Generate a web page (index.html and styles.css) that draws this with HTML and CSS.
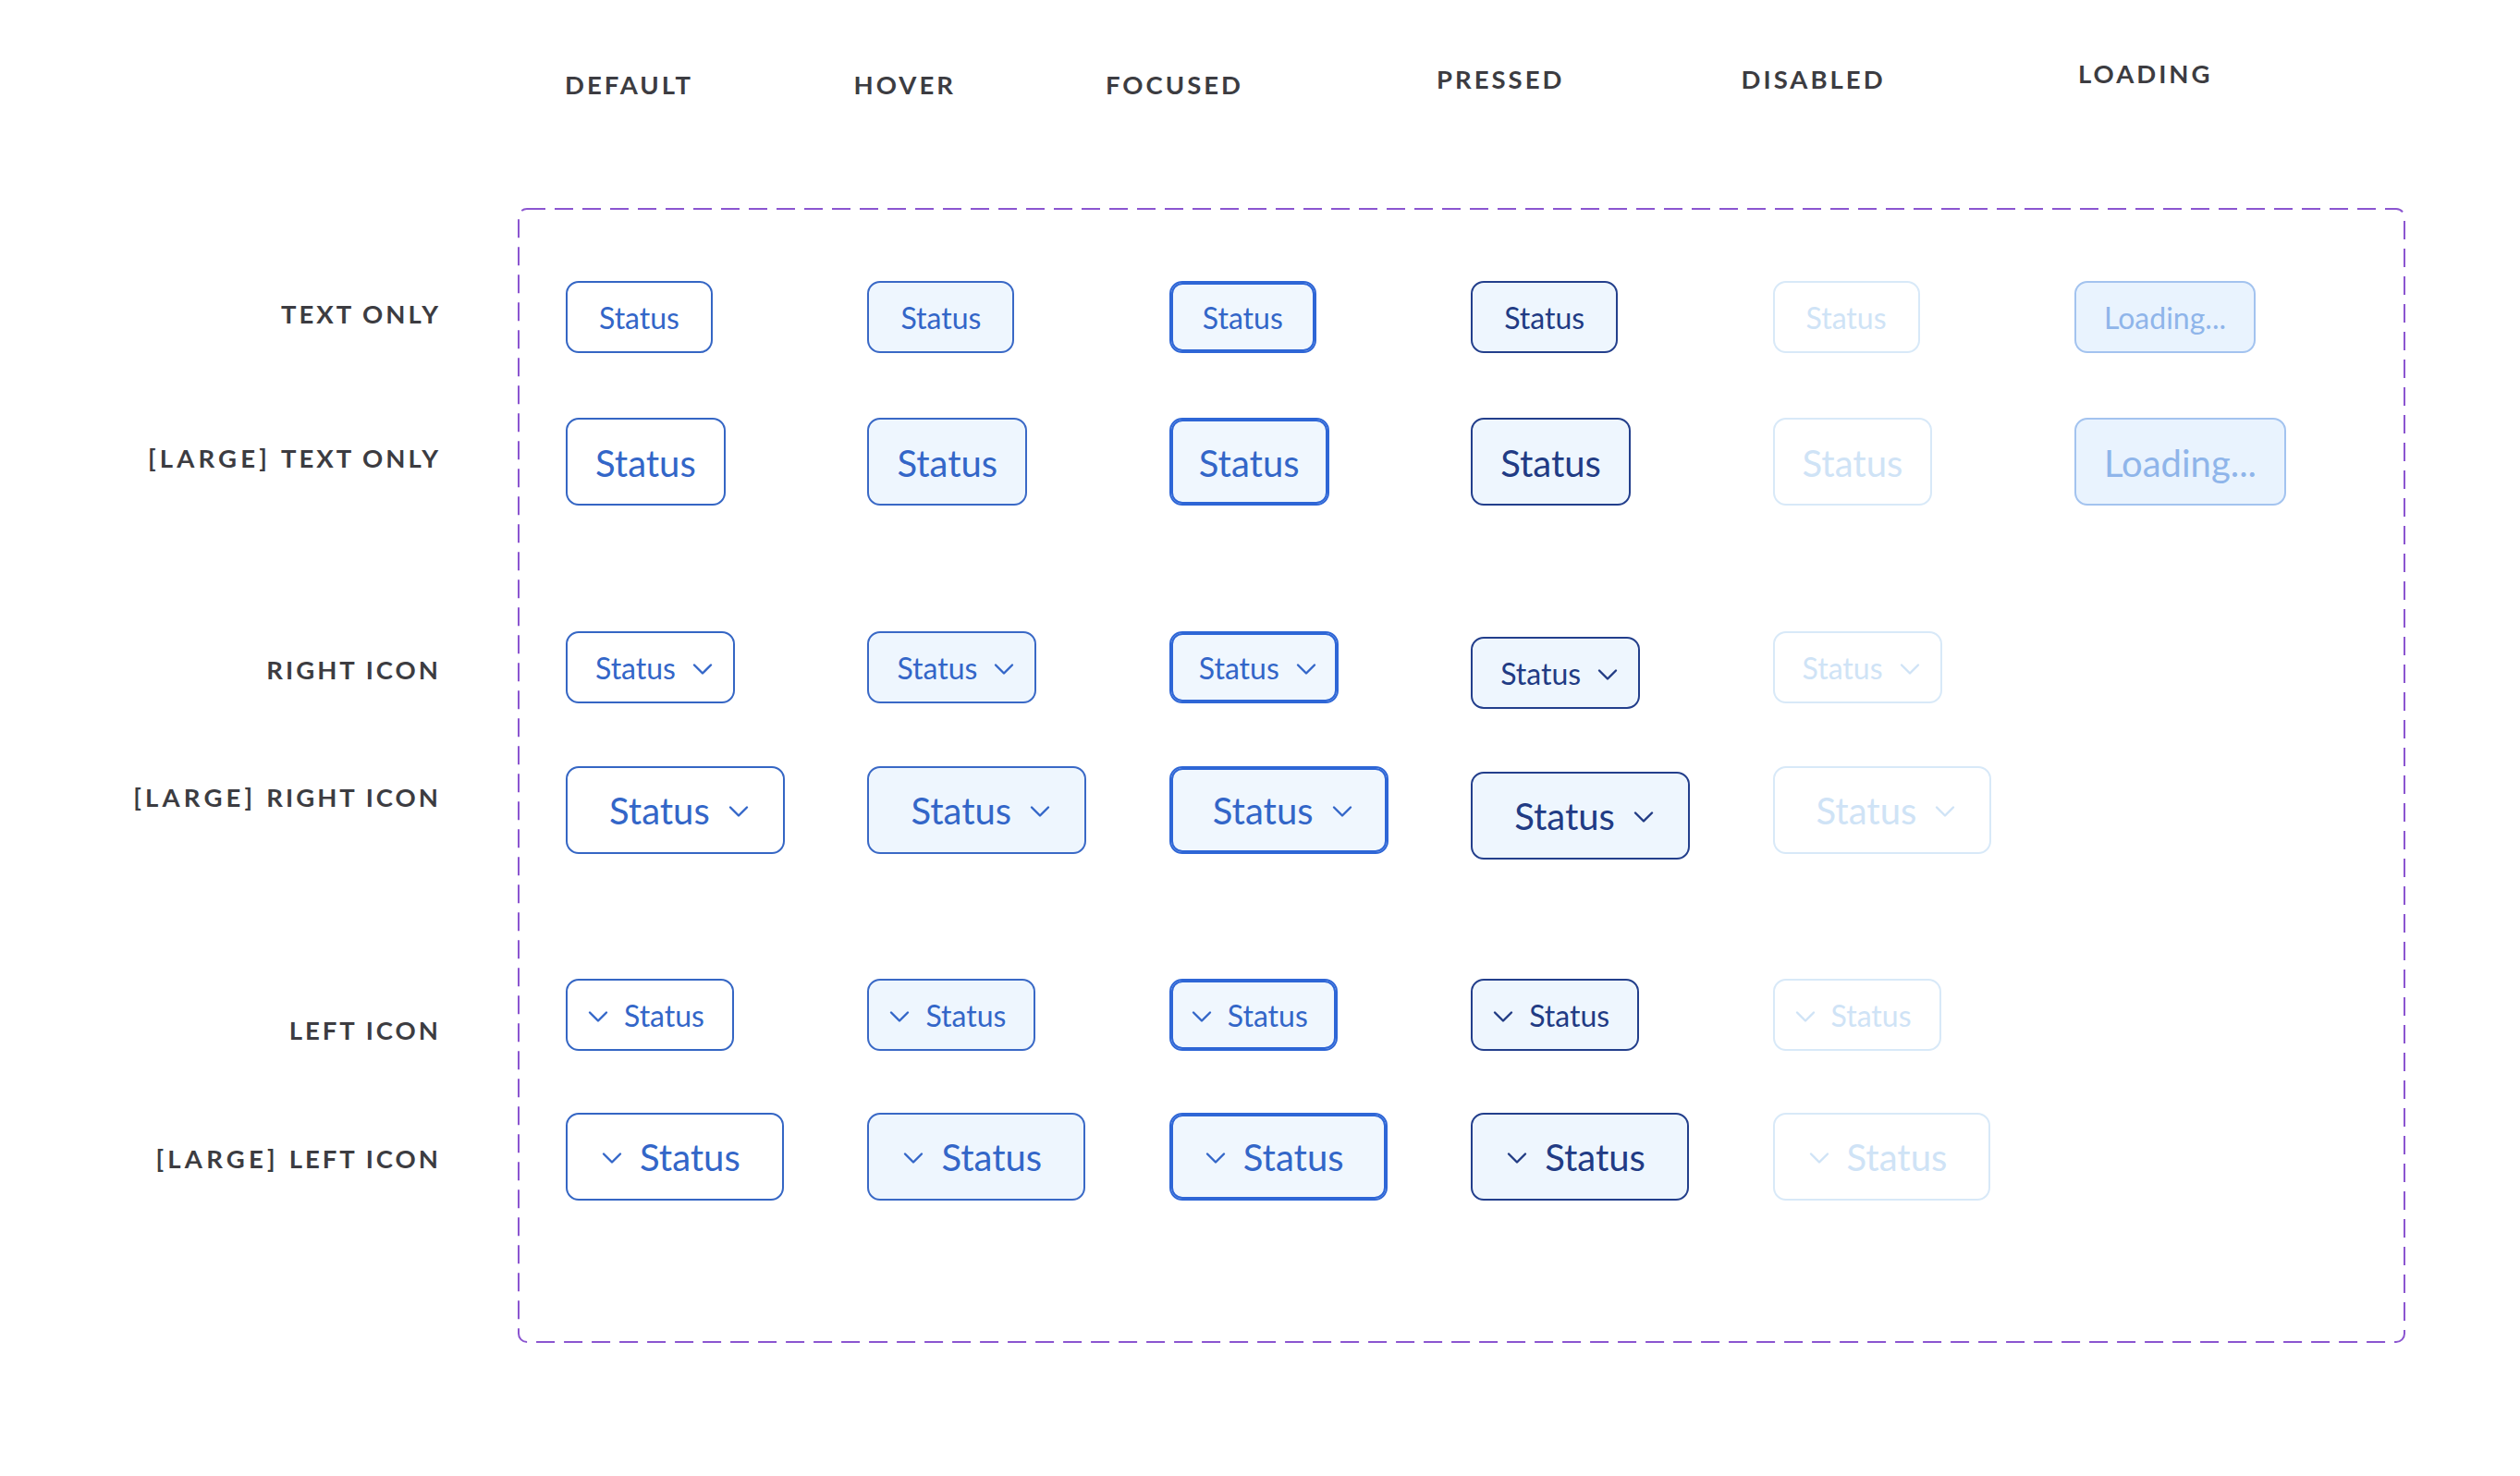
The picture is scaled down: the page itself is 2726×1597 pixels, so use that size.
FILE: index.html
```html
<!DOCTYPE html>
<html lang="en">
<head>
<meta charset="utf-8">
<title>Status button states</title>
<link rel="stylesheet" href="styles.css">
</head>
<body>
<div class="page">
  <header class="state-heads">
    <div class="state-head head-default">DEFAULT</div>
    <div class="state-head head-hover">HOVER</div>
    <div class="state-head head-focused">FOCUSED</div>
    <div class="state-head head-pressed">PRESSED</div>
    <div class="state-head head-disabled">DISABLED</div>
    <div class="state-head head-loading">LOADING</div>
  </header>

  <main class="matrix">
    <div class="row-labels">
      <div class="row row-1"><span class="row-label label-1">TEXT ONLY</span></div>
      <div class="row row-2"><span class="row-label label-2"><span class="size-tag">[LARGE] </span>TEXT ONLY</span></div>
      <div class="row row-3"><span class="row-label label-3">RIGHT ICON</span></div>
      <div class="row row-4"><span class="row-label label-4"><span class="size-tag">[LARGE] </span>RIGHT ICON</span></div>
      <div class="row row-5"><span class="row-label label-5">LEFT ICON</span></div>
      <div class="row row-6"><span class="row-label label-6"><span class="size-tag">[LARGE] </span>LEFT ICON</span></div>
    </div>

    <section class="frame">
      <svg class="frame-line" aria-hidden="true"><rect class="frame-rect"></rect></svg>

      <div class="row btn-row row-1">
        <button class="btn sm is-default">Status</button>
        <button class="btn sm is-hover">Status</button>
        <button class="btn sm is-focused">Status</button>
        <button class="btn sm is-pressed">Status</button>
        <button class="btn sm is-disabled">Status</button>
        <button class="btn sm is-loading">Loading...</button>
      </div>

      <div class="row btn-row row-2">
        <button class="btn lg is-default">Status</button>
        <button class="btn lg is-hover">Status</button>
        <button class="btn lg is-focused">Status</button>
        <button class="btn lg is-pressed">Status</button>
        <button class="btn lg is-disabled">Status</button>
        <button class="btn lg is-loading">Loading...</button>
      </div>

      <div class="row btn-row row-3">
        <button class="btn sm icon-right is-default">Status<svg class="chev" viewBox="0 0 24 24"><path d="M3 8.5l9 9 9-9"/></svg></button>
        <button class="btn sm icon-right is-hover">Status<svg class="chev" viewBox="0 0 24 24"><path d="M3 8.5l9 9 9-9"/></svg></button>
        <button class="btn sm icon-right is-focused">Status<svg class="chev" viewBox="0 0 24 24"><path d="M3 8.5l9 9 9-9"/></svg></button>
        <button class="btn sm icon-right is-pressed shifted">Status<svg class="chev" viewBox="0 0 24 24"><path d="M3 8.5l9 9 9-9"/></svg></button>
        <button class="btn sm icon-right is-disabled">Status<svg class="chev" viewBox="0 0 24 24"><path d="M3 8.5l9 9 9-9"/></svg></button>
      </div>

      <div class="row btn-row row-4">
        <button class="btn lg icon-right is-default">Status<svg class="chev" viewBox="0 0 24 24"><path d="M3 8.5l9 9 9-9"/></svg></button>
        <button class="btn lg icon-right is-hover">Status<svg class="chev" viewBox="0 0 24 24"><path d="M3 8.5l9 9 9-9"/></svg></button>
        <button class="btn lg icon-right is-focused">Status<svg class="chev" viewBox="0 0 24 24"><path d="M3 8.5l9 9 9-9"/></svg></button>
        <button class="btn lg icon-right is-pressed shifted">Status<svg class="chev" viewBox="0 0 24 24"><path d="M3 8.5l9 9 9-9"/></svg></button>
        <button class="btn lg icon-right is-disabled">Status<svg class="chev" viewBox="0 0 24 24"><path d="M3 8.5l9 9 9-9"/></svg></button>
      </div>

      <div class="row btn-row row-5">
        <button class="btn sm icon-left is-default"><svg class="chev" viewBox="0 0 24 24"><path d="M3 8.5l9 9 9-9"/></svg>Status</button>
        <button class="btn sm icon-left is-hover"><svg class="chev" viewBox="0 0 24 24"><path d="M3 8.5l9 9 9-9"/></svg>Status</button>
        <button class="btn sm icon-left is-focused"><svg class="chev" viewBox="0 0 24 24"><path d="M3 8.5l9 9 9-9"/></svg>Status</button>
        <button class="btn sm icon-left is-pressed"><svg class="chev" viewBox="0 0 24 24"><path d="M3 8.5l9 9 9-9"/></svg>Status</button>
        <button class="btn sm icon-left is-disabled"><svg class="chev" viewBox="0 0 24 24"><path d="M3 8.5l9 9 9-9"/></svg>Status</button>
      </div>

      <div class="row btn-row row-6">
        <button class="btn lg icon-left is-default"><svg class="chev" viewBox="0 0 24 24"><path d="M3 8.5l9 9 9-9"/></svg>Status</button>
        <button class="btn lg icon-left is-hover"><svg class="chev" viewBox="0 0 24 24"><path d="M3 8.5l9 9 9-9"/></svg>Status</button>
        <button class="btn lg icon-left is-focused"><svg class="chev" viewBox="0 0 24 24"><path d="M3 8.5l9 9 9-9"/></svg>Status</button>
        <button class="btn lg icon-left is-pressed"><svg class="chev" viewBox="0 0 24 24"><path d="M3 8.5l9 9 9-9"/></svg>Status</button>
        <button class="btn lg icon-left is-disabled"><svg class="chev" viewBox="0 0 24 24"><path d="M3 8.5l9 9 9-9"/></svg>Status</button>
      </div>
    </section>
  </main>
</div>
</body>
</html>
```

FILE: styles.css
```css
* { box-sizing: border-box; }

html, body {
  margin: 0;
  padding: 0;
  background: #ffffff;
}

.page {
  width: 2726px;
  height: 1597px;
  overflow: hidden;
  font-family: "Lato", "Liberation Sans", sans-serif;
}

/* ---------- column headings ---------- */
.state-heads {
  display: flex;
  align-items: flex-start;
  height: 225px;
  padding: 66px 0 0 611px;
}

.state-head {
  font-size: 27.5px;
  line-height: 28px;
  font-weight: 700;
  letter-spacing: 3px;
  color: #3c3c41;
  white-space: nowrap;
}

.head-default  { width: 312.6px; margin-top: 12px; }
.head-hover    { width: 272.4px; margin-top: 12px; }
.head-focused  { width: 358px;   margin-top: 12px; }
.head-pressed  { width: 329.6px; margin-top: 6px; }
.head-disabled { width: 364.4px; margin-top: 6px; }
.head-loading  { margin-top: 0; }

/* ---------- matrix ---------- */
.matrix {
  display: flex;
  align-items: flex-start;
}

.row-labels {
  width: 474px;
  padding-top: 79px;
  display: flex;
  flex-direction: column;
}

.row-1 { height: 148px; }
.row-2 { height: 230.7px; }
.row-3 { height: 146.3px; }
.row-4 { height: 229.7px; }
.row-5 { height: 145.3px; }
.row-6 { height: 249px; }

.row-labels .row {
  display: flex;
  justify-content: flex-end;
  align-items: flex-start;
}

.row-label {
  font-size: 27.5px;
  line-height: 28px;
  font-weight: 700;
  letter-spacing: 3px;
  margin-right: -3px;
  color: #3c3c41;
  white-space: nowrap;
}

.size-tag { letter-spacing: 4.2px; }

.label-1 { margin-top: 22px; }
.label-2 { margin-top: 30px; }
.label-3 { margin-top: 28px; }
.label-4 { margin-top: 20.5px; }
.label-5 { margin-top: 42px; }
.label-6 { margin-top: 36px; }

.frame {
  position: relative;
  width: 2042px;
  height: 1228px;
  margin-left: 86px;
  padding: 79px 0 0 52px;
}

.frame-line {
  position: absolute;
  inset: 0;
  width: 100%;
  height: 100%;
  overflow: visible;
  pointer-events: none;
}

.frame-rect {
  x: 1px;
  y: 1px;
  width: calc(100% - 2px);
  height: calc(100% - 2px);
  rx: 9px;
  ry: 9px;
  fill: none;
  stroke: #8b55d0;
  stroke-width: 2px;
  stroke-dasharray: 20 10;
}

.btn-row {
  display: grid;
  grid-template-columns: repeat(6, 326.4px);
  align-items: start;
  justify-items: start;
}

/* ---------- buttons ---------- */
.btn {
  display: inline-flex;
  align-items: center;
  justify-content: center;
  margin: 0;
  font-family: "Lato", "Liberation Sans", sans-serif;
  font-weight: 400;
  white-space: nowrap;
  border: 2px solid #3566c4;
  background: #ffffff;
  color: #3366c8;
  border-radius: 14px;
  cursor: pointer;
  -webkit-appearance: none;
  appearance: none;
}

.btn.sm {
  height: 78px;
  font-size: 32px;
  line-height: 40px;
  padding: 2px 34px 0;
}

.btn.lg {
  height: 95px;
  font-size: 40px;
  line-height: 50px;
  padding: 2px 30px 0;
}

.btn.sm.is-loading { padding: 2px 30px 0; }

.chev {
  width: 24px;
  height: 24px;
  flex: none;
  fill: none;
  stroke: currentColor;
  stroke-width: 2.4;
  stroke-linecap: round;
  stroke-linejoin: round;
}

.btn.sm.icon-right { padding: 2px 21px 0 30px; gap: 17px; }
.btn.lg.icon-right { padding: 2px 36px 0 45px; gap: 19px; }
.btn.sm.icon-left  { padding: 2px 30px 0 21px; gap: 16px; }
.btn.lg.icon-left  { padding: 2px 45px 0 36px; gap: 18px; }

.is-default {
  background: #ffffff;
  border-color: #3566c4;
  color: #3366c8;
}

.is-hover {
  background: #eef6fe;
  border-color: #3a69c6;
  color: #3366c8;
}

.is-focused {
  background: #f0f7fe;
  border-color: #2e66d6;
  box-shadow: inset 0 0 0 2px #2e66d6;
  color: #3366c8;
}

.is-pressed {
  background: #eef6fe;
  border-color: #233f8c;
  color: #213b84;
}

.is-disabled {
  background: #ffffff;
  border-color: #d8e9f8;
  color: #cfe3f6;
  cursor: default;
}

.is-loading {
  background: #e9f3fe;
  border-color: #a3c3ef;
  color: #8fb5ea;
  cursor: default;
}

.shifted { margin-top: 6px; }
```
